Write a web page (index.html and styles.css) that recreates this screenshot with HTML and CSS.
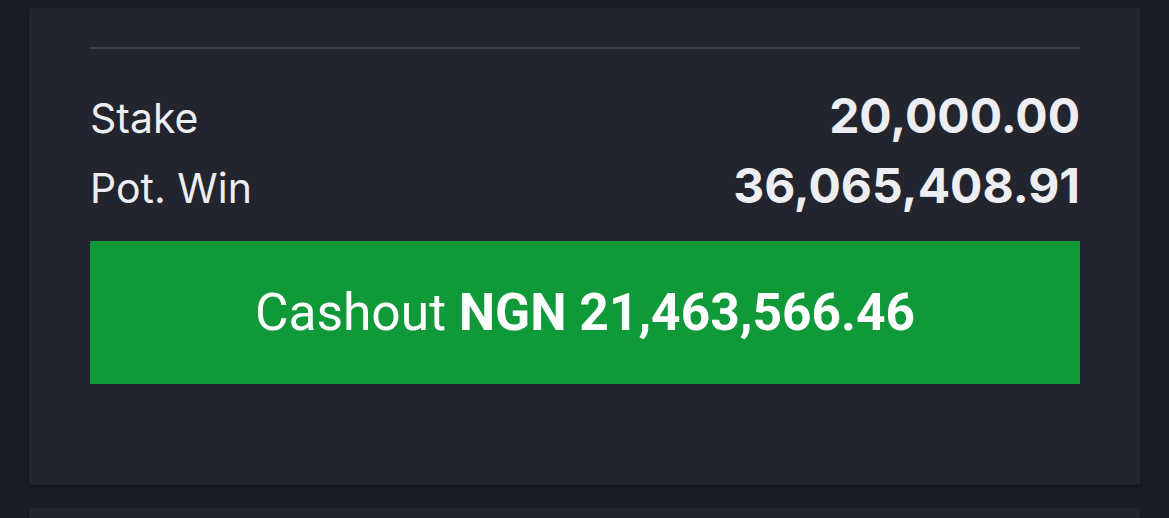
FILE: index.html
```html
<!DOCTYPE html>
<html lang="en">
<head>
<meta charset="utf-8">
<title>Bet slip</title>
<link rel="stylesheet" href="styles.css">
</head>
<body>
  <main class="list">
    <section class="card">
      <hr class="divider">
      <div class="summary">
        <div class="row">
          <span class="label">Stake</span>
          <span class="value">20,000.00</span>
        </div>
        <div class="row">
          <span class="label">Pot. Win</span>
          <span class="value">36,065,408.91</span>
        </div>
      </div>
      <button class="cashout" type="button">Cashout <strong>NGN 21,463,566.46</strong></button>
    </section>
    <section class="card card-next"></section>
  </main>
</body>
</html>
```

FILE: styles.css
```css
html, body {
  margin: 0;
  padding: 0;
}

body {
  background: #1b1d24;
  font-family: Inter, "Noto Sans", sans-serif;
  color: #eceef2;
  overflow: hidden;
  height: 518px;
}

.list {
  display: flex;
  flex-direction: column;
  gap: 24px;
  padding: 8px 29px 0;
}

.card {
  background: #22252e;
  padding: 39px 60px 100px 61px;
  box-shadow: 0 1px 0 #1f2129, 0 3px 3px rgba(0, 0, 0, 0.35);
}

.card-next {
  height: 10px;
  padding: 0;
}

.divider {
  margin: 0;
  border: 0;
  height: 2px;
  background: #393c45;
}

.summary {
  display: flex;
  flex-direction: column;
  padding-top: 32px;
}

.row {
  display: flex;
  justify-content: space-between;
  align-items: baseline;
  height: 70px;
  line-height: 70px;
}

.label {
  font-size: 41px;
  font-weight: 400;
  color: #eceef2;
}

.value {
  font-size: 48px;
  font-weight: 700;
  color: #eceef2;
}

.cashout {
  display: block;
  width: 100%;
  height: 143px;
  margin-top: 20px;
  border: 0;
  background: #0f9939;
  color: #ffffff;
  font-family: Roboto, "Liberation Sans", sans-serif;
  font-size: 51.5px;
  font-weight: 400;
  padding: 0;
}

.cashout strong {
  font-weight: 700;
}
```
